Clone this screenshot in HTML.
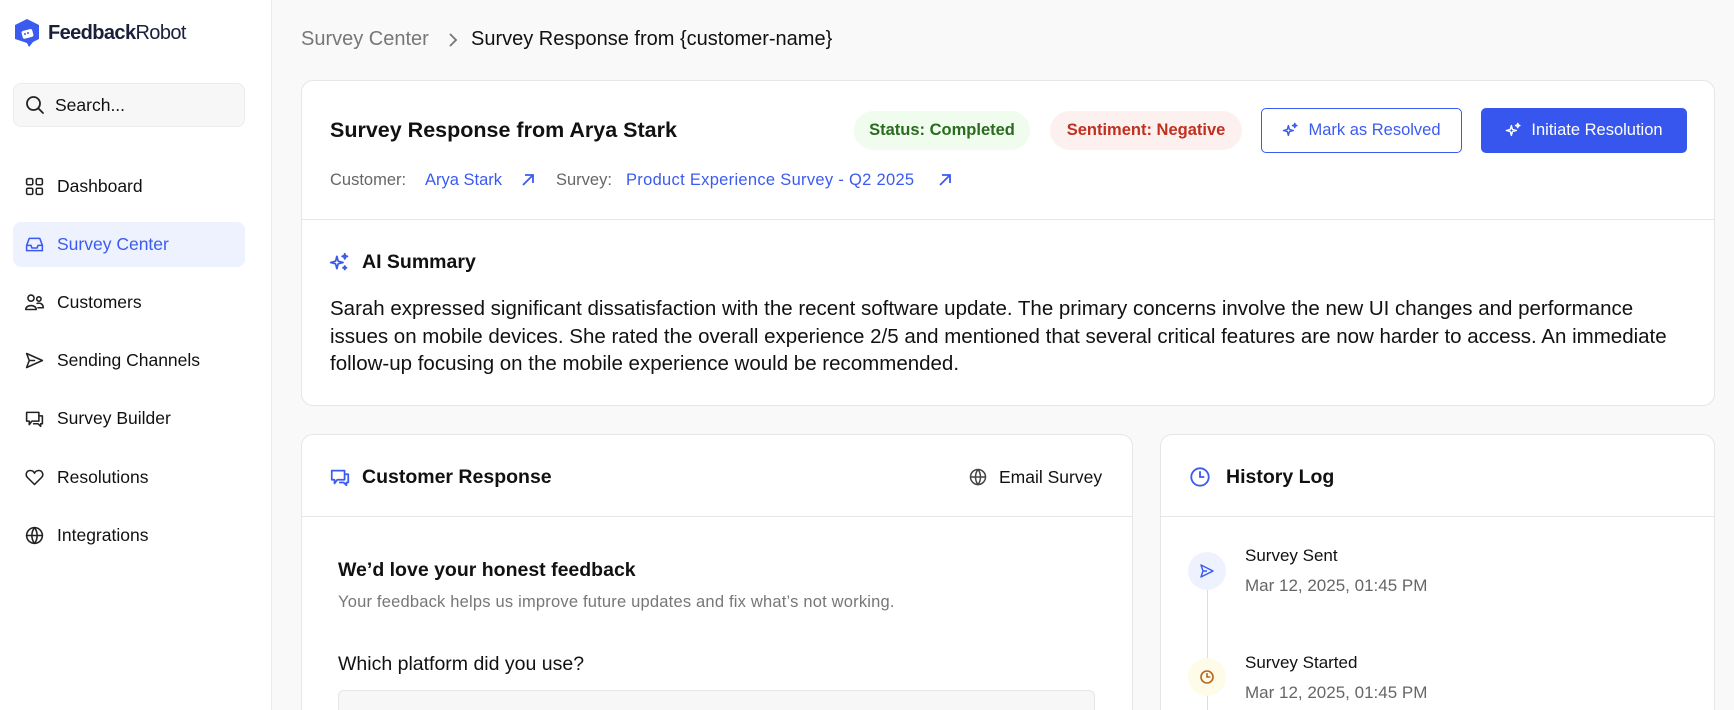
<!DOCTYPE html>
<html style="width:1734px;height:710px;overflow:hidden;background:#f9f9f9"><head><meta charset="utf-8"><style>
*{box-sizing:border-box;margin:0;padding:0}
body{width:1734px;height:710px;overflow:hidden;background:#f9f9f9;font-family:"Liberation Sans",sans-serif;color:#111;position:relative}
.abs{position:absolute}
.side{left:0;top:0;width:272px;height:710px;background:#fff;border-right:1px solid #ececec}
.nav{left:24px;font-size:17.5px;color:#111;display:flex;align-items:center;gap:12px;height:22px}
.nav svg{width:21px;height:21px;fill:none;stroke:#222;stroke-width:1.8;stroke-linecap:round;stroke-linejoin:round}
.card{background:#fff;border:1px solid #e6e6e6;border-radius:12px}
</style></head><body>
<div class="abs side"></div>
<svg class="abs" style="left:13px;top:18px" width="28" height="30" viewBox="0 0 28 30"><path d="M14 1 L26 7 V21 L20 24 L16 29 L14 25 L2 21 V7 Z" fill="#3b5bf0"/><rect x="9" y="12" width="11" height="8" rx="2" fill="#fff" transform="rotate(-15 14 16)"/><circle cx="12" cy="16" r="1" fill="#3b5bf0"/><circle cx="15" cy="15" r="1" fill="#3b5bf0"/></svg>
<div class="abs" style="left:48px;top:22px;font-size:20px;color:#1a1f3a;letter-spacing:-0.6px"><b style="font-weight:600">Feedback</b>Robot</div>
<div class="abs" style="left:13px;top:83px;width:232px;height:44px;background:#f7f7f7;border:1px solid #ececec;border-radius:8px"></div>
<svg class="abs" style="left:25px;top:95px" width="20" height="20" viewBox="0 0 20 20" fill="none" stroke="#222" stroke-width="1.8"><circle cx="8.5" cy="8.5" r="6.5"/><path d="M13.5 13.5 L18 18" stroke-linecap="round"/></svg>
<div class="abs" style="left:55px;top:95px;font-size:17.5px">Search...</div>

<div class="abs" style="left:13px;top:222px;width:232px;height:45px;background:#eef2fe;border-radius:8px"></div>
<div class="abs nav" style="top:175px"><svg viewBox="0 0 24 24"><rect x="3" y="3" width="7" height="7" rx="1.5"/><rect x="14" y="3" width="7" height="7" rx="1.5"/><rect x="3" y="14" width="7" height="7" rx="1.5"/><rect x="14" y="14" width="7" height="7" rx="1.5"/></svg>Dashboard</div>
<div class="abs nav" style="top:233px;color:#3b5bf0"><svg viewBox="0 0 24 24" style="stroke:#3b5bf0"><path d="M3 13 L6 5 H18 L21 13 V19 H3 Z M3 13 H8 L9 16 H15 L16 13 H21"/></svg>Survey Center</div>
<div class="abs nav" style="top:291px"><svg viewBox="0 0 24 24"><circle cx="8" cy="7" r="3.5"/><circle cx="17" cy="8" r="2.5"/><path d="M2 20 C2 14 14 14 14 20 Z M15 13 C19 12 22 14 22 18 H16"/></svg>Customers</div>
<div class="abs nav" style="top:349px"><svg viewBox="0 0 24 24"><path d="M3 4 L21 12 L3 20 L6 12 Z M6 12 H12"/></svg>Sending Channels</div>
<div class="abs nav" style="top:407px"><svg viewBox="0 0 24 24"><path d="M3 5 H17 V15 H9 L6 19 V15 H3 Z M17 9 H21 V18 H19 V21 L16 18 H11"/></svg>Survey Builder</div>
<div class="abs nav" style="top:466px"><svg viewBox="0 0 24 24"><path d="M12 20 L4 12 C1 9 3 4 7 4 C9 4 11 5 12 7 C13 5 15 4 17 4 C21 4 23 9 20 12 Z"/></svg>Resolutions</div>
<div class="abs nav" style="top:524px"><svg viewBox="0 0 24 24"><circle cx="12" cy="12" r="9"/><path d="M3 12 H21 M12 3 C8 8 8 16 12 21 C16 16 16 8 12 3"/></svg>Integrations</div>

<div class="abs" style="left:301px;top:28px;font-size:20px;color:#777">Survey Center</div>
<svg class="abs" style="left:446px;top:32px" width="14" height="16" viewBox="0 0 14 16" fill="none" stroke="#777" stroke-width="1.8"><path d="M4 2 L10 8 L4 14"/></svg>
<div class="abs" style="left:471px;top:28px;font-size:20px;color:#111">Survey Response from {customer-name}</div>

<div class="abs card" style="left:301px;top:80px;width:1414px;height:326px"></div>
<div class="abs" style="left:301px;top:219px;width:1414px;height:1px;background:#e6e6e6"></div>
<div class="abs" style="left:330px;top:118px;font-size:21.5px;font-weight:bold">Survey Response from Arya Stark</div>
<div class="abs" style="left:330px;top:171px;font-size:16.5px;color:#666">Customer:</div>
<div class="abs" style="left:425px;top:171px;font-size:16.5px;color:#3b5bf0">Arya Stark</div>
<svg class="abs" style="left:520px;top:172px" width="16" height="16" viewBox="0 0 16 16" fill="none" stroke="#3b5bf0" stroke-width="1.8"><path d="M3 13 L13 3 M5 3 H13 V11"/></svg>
<div class="abs" style="left:556px;top:171px;font-size:16.5px;color:#666">Survey:</div>
<div class="abs" style="left:626px;top:171px;font-size:16.5px;color:#3b5bf0;letter-spacing:0.3px">Product Experience Survey - Q2 2025</div>
<svg class="abs" style="left:937px;top:172px" width="16" height="16" viewBox="0 0 16 16" fill="none" stroke="#3b5bf0" stroke-width="1.8"><path d="M3 13 L13 3 M5 3 H13 V11"/></svg>

<div class="abs" style="left:854px;top:111px;width:176px;height:39px;border-radius:20px;background:#effcee;color:#2a6b1f;font-size:16.5px;font-weight:bold;text-align:center;line-height:39px">Status: Completed</div>
<div class="abs" style="left:1050px;top:111px;width:192px;height:39px;border-radius:20px;background:#fdf1f0;color:#c0301f;font-size:16.5px;font-weight:bold;text-align:center;line-height:39px">Sentiment: Negative</div>
<div class="abs" style="left:1261px;top:108px;width:201px;height:45px;border:1.5px solid #3b5bf0;border-radius:5px;color:#3b5bf0;font-size:16.5px;display:flex;align-items:center;justify-content:center;gap:9px"><svg width="17" height="17" viewBox="0 0 24 24" fill="none" stroke="#3b5bf0" stroke-width="2" stroke-linejoin="round"><path d="M9 5 L10.5 10.5 L16 12 L10.5 13.5 L9 19 L7.5 13.5 L2 12 L7.5 10.5 Z M18 2 L18.8 4.2 L21 5 L18.8 5.8 L18 8 L17.2 5.8 L15 5 L17.2 4.2 Z"/></svg>Mark as Resolved</div>
<div class="abs" style="left:1481px;top:108px;width:206px;height:45px;background:#3656ee;border-radius:5px;color:#fff;font-size:16.5px;display:flex;align-items:center;justify-content:center;gap:9px"><svg width="17" height="17" viewBox="0 0 24 24" fill="none" stroke="#fff" stroke-width="2" stroke-linejoin="round"><path d="M9 5 L10.5 10.5 L16 12 L10.5 13.5 L9 19 L7.5 13.5 L2 12 L7.5 10.5 Z M18 2 L18.8 4.2 L21 5 L18.8 5.8 L18 8 L17.2 5.8 L15 5 L17.2 4.2 Z"/></svg>Initiate Resolution</div>

<svg class="abs" style="left:329px;top:252px" width="21" height="21" viewBox="0 0 24 24" fill="none" stroke="#3b5bf0" stroke-width="2" stroke-linejoin="round"><path d="M9 5 L10.5 10.5 L16 12 L10.5 13.5 L9 19 L7.5 13.5 L2 12 L7.5 10.5 Z M18 2 L18.8 4.2 L21 5 L18.8 5.8 L18 8 L17.2 5.8 L15 5 L17.2 4.2 Z M18 16 L18.6 17.4 L20 18 L18.6 18.6 L18 20 L17.4 18.6 L16 18 L17.4 17.4 Z"/></svg>
<div class="abs" style="left:362px;top:251px;font-size:19.5px;font-weight:bold">AI Summary</div>
<div class="abs" style="left:330px;top:295px;width:1345px;font-size:20.5px;line-height:27.6px;color:#111">Sarah expressed significant dissatisfaction with the recent software update. The primary concerns involve the new UI changes and performance issues on mobile devices. She rated the overall experience 2/5 and mentioned that several critical features are now harder to access. An immediate follow-up focusing on the mobile experience would be recommended.</div>

<div class="abs card" style="left:301px;top:434px;width:832px;height:300px"></div>
<div class="abs" style="left:301px;top:516px;width:832px;height:1px;background:#e6e6e6"></div>
<svg class="abs" style="left:329px;top:466px" width="22" height="22" viewBox="0 0 24 24" fill="none" stroke="#3b5bf0" stroke-width="1.9" stroke-linejoin="round"><path d="M3 5 H17 V15 H9 L6 19 V15 H3 Z M17 9 H21 V18 H19 V21 L16 18 H11"/></svg>
<div class="abs" style="left:362px;top:466px;font-size:19.5px;font-weight:bold">Customer Response</div>
<svg class="abs" style="left:968px;top:467px" width="20" height="20" viewBox="0 0 24 24" fill="none" stroke="#444" stroke-width="1.8"><circle cx="12" cy="12" r="9"/><path d="M3 12 H21 M12 3 C8 8 8 16 12 21 C16 16 16 8 12 3"/></svg>
<div class="abs" style="left:999px;top:467px;font-size:17.5px">Email Survey</div>
<div class="abs" style="left:338px;top:559px;font-size:19.5px;font-weight:bold">We’d love your honest feedback</div>
<div class="abs" style="left:338px;top:593px;font-size:16.5px;color:#777;letter-spacing:0.2px">Your feedback helps us improve future updates and fix what’s not working.</div>
<div class="abs" style="left:338px;top:653px;font-size:19.5px">Which platform did you use?</div>
<div class="abs" style="left:338px;top:690px;width:757px;height:40px;background:#f7f7f7;border:1px solid #e6e6e6;border-radius:6px"></div>

<div class="abs card" style="left:1160px;top:434px;width:555px;height:300px"></div>
<div class="abs" style="left:1160px;top:516px;width:555px;height:1px;background:#e6e6e6"></div>
<svg class="abs" style="left:1189px;top:466px" width="22" height="22" viewBox="0 0 24 24" fill="none" stroke="#3b5bf0" stroke-width="2" stroke-linecap="round"><circle cx="12" cy="12" r="9.5"/><path d="M12 6.5 V12 H16"/></svg>
<div class="abs" style="left:1226px;top:466px;font-size:19.5px;font-weight:bold">History Log</div>
<div class="abs" style="left:1207px;top:580px;width:1px;height:130px;background:#ddd"></div>
<div class="abs" style="left:1188px;top:552px;width:38px;height:38px;border-radius:50%;background:#eef2fe"></div>
<svg class="abs" style="left:1199px;top:563px" width="16" height="16" viewBox="0 0 24 24" fill="none" stroke="#3b5bf0" stroke-width="2.2" stroke-linejoin="round"><path d="M3 3 L21 12 L3 21 L6 12 Z M6 12 H12"/></svg>
<div class="abs" style="left:1245px;top:546px;font-size:17px">Survey Sent</div>
<div class="abs" style="left:1245px;top:576px;font-size:17px;color:#666">Mar 12, 2025, 01:45 PM</div>
<div class="abs" style="left:1188px;top:658px;width:38px;height:38px;border-radius:50%;background:#fefbe8"></div>
<svg class="abs" style="left:1199px;top:669px" width="16" height="16" viewBox="0 0 24 24" fill="none" stroke="#b5651d" stroke-width="2.4" stroke-linecap="round"><circle cx="12" cy="12" r="9"/><path d="M12 7 V12 H16"/></svg>
<div class="abs" style="left:1245px;top:653px;font-size:17px">Survey Started</div>
<div class="abs" style="left:1245px;top:683px;font-size:17px;color:#666">Mar 12, 2025, 01:45 PM</div>
</body></html>
